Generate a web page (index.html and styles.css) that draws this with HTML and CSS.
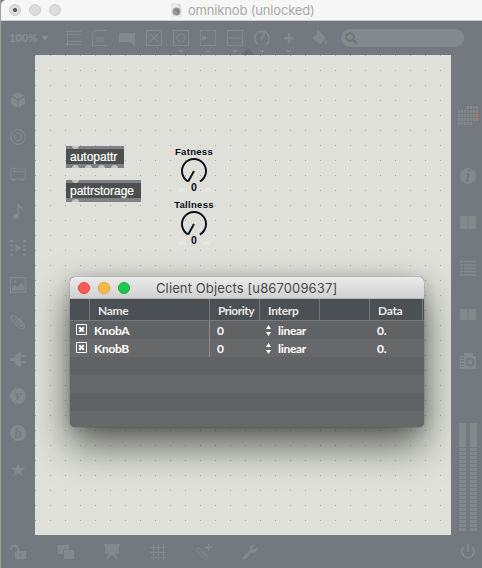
FILE: index.html
```html
<!DOCTYPE html>
<html lang="en">
<head>
<meta charset="utf-8">
<title>omniknob (unlocked)</title>
<link rel="stylesheet" href="styles.css">
</head>
<body>
<svg width="0" height="0" class="defs">
  <symbol id="book" viewBox="0 0 16 14"><path d="M0 0h7.600v14H0zM8.400 0H16v14H8.400z"/></symbol>
  <symbol id="clip" viewBox="0 0 16 16"><path class="ln" d="M5 5l6 7c1 1 2.600-.2 1.700-1.400L6 2.800C3.500 0-.7 2.500 1.500 5.500l6.700 7.700c4 4 8.500.7 5.500-3.500L9 4.300"/></symbol>
  <symbol id="dial" viewBox="0 0 28 28"><path class="arc" d="M8.200 24.500A12 12 0 1 1 19.800 24.500M14 14L8.200 24.500"/></symbol>
</svg>
<div class="app">
  <header class="title">
    <i class="light closed"></i><i class="light"></i><i class="light"></i>
    <svg class="doc" width="11" height="14" viewBox="0 0 11 14"><path d="M0 0h7.500L11 3.500V14H0z" fill="#e9e9e9"/><path d="M7.500 0v3.500H11" fill="#d4d4d4"/><circle cx="5.500" cy="8.500" r="4" fill="#96989b"/><path d="M4 7h3v3" stroke="#64686c" fill="none"/></svg>
    <span class="name">omniknob (unlocked)</span>
  </header>
  <div class="toolbar">
    <span class="zoom">100%</span><i class="caret"></i>
    <div class="tools">
      <svg viewBox="0 0 16 24"><path class="ln thin" d="M2.500 0v16M0 1.500h16M3 4.500h13M3 11.500h13M0 14.500h16"/></svg>
      <svg viewBox="0 0 16 24"><path class="ln" d="M15 .5H3L.5 3v12.500H15"/><text x="4" y="11.500" class="glyph m">m</text></svg>
      <svg viewBox="0 0 16 24"><path d="M0 3h16v13l-5-4H0z"/></svg>
      <svg viewBox="0 0 16 24"><path class="ln" d="M.5.5h15v15H.5zM4 4l8 8M12 4l-8 8"/></svg>
      <svg viewBox="0 0 16 24"><path class="ln" d="M.5.5h15v15H.5z"/><circle class="ln" cx="8" cy="8" r="4"/><path d="M5 20h6l-3 3z"/></svg>
      <svg viewBox="0 0 16 24"><path class="ln" d="M.5.5h15v15H.5z"/><path d="M2 5l6 3-6 3zM5 20h6l-3 3z"/></svg>
      <svg viewBox="0 0 16 24"><path class="ln" d="M.5.5h15v15H.5zM2 8h12"/><path d="M5 20h6l-3 3z"/></svg>
      <svg viewBox="0 0 16 24"><path class="notch" d="M-13 25l7-7 7 7z"/><path class="ln wide" d="M4 14.500A7.200 7.200 0 1 1 12 14.500M7 10l3.500-7"/><path d="M5 20h6l-3 3z"/></svg>
      <svg viewBox="0 0 16 24"><path d="M6.700 3h2.600v4H13v2.600H9.300v4H6.700v-4H3V7h3.700zM5 20h6l-3 3z"/></svg>
      <svg class="bucket" viewBox="0 0 16 24"><path d="M5 1l1-1 8 8-6 6-8-6 5-4V3zM14 9c1.500 3 2 5 0 5s-1.500-2 0-5z"/></svg>
    </div>
    <div class="search"><svg width="13" height="13" viewBox="0 0 13 13"><circle cx="5" cy="5" r="3.800"/><path d="M8 8l4 4"/></svg></div>
  </div>
  <main class="middle">
    <nav class="rail left">
      <svg viewBox="0 0 16 16"><path d="M8 0l6.500 3.500L8 7 1.500 3.500zM1 4.500l6.500 3.700V16L1 12zM15 4.500L8.500 8.200V16L15 12z"/></svg>
      <svg viewBox="0 0 16 16"><g class="ln"><circle cx="8" cy="8" r="7.300"/><circle cx="8" cy="8" r="3.500"/></g></svg>
      <svg viewBox="0 0 16 16"><path class="ln" d="M.7 3h14.600v10H.7zM3 5.500h10.500M2.500 2h2M2 14.200h2.500M11 14.200h2.500"/></svg>
      <svg viewBox="0 0 16 16"><path d="M7.500 0h1.400c.3 3.200 6 3.500 4.300 9-.2-3-1.700-4-4-4v7.500c0 4.200-6.200 4.500-6.200 1.300 0-2.500 2.600-3.500 4.500-2.600z"/></svg>
      <svg viewBox="0 0 16 16"><path d="M5.500 4l6 4-6 4z"/><path class="ln film" d="M1.500 0v16M14.500 0v16"/></svg>
      <svg viewBox="0 0 16 16"><path class="ln" d="M.6.600h14.800v14.800H.6z"/><path d="M2 13.500V11l3-3 3 3 3.500-5.500L14 9.500v4z"/><circle cx="5" cy="4.500" r="1.300"/></svg>
      <svg viewBox="0 0 16 16"><use href="#clip"/></svg>
      <svg viewBox="0 0 16 16"><path d="M0 7h4c.5-3 3-5 7-6v3h5v2h-5v4h5v2h-5v4c-4-1-6.500-3-7-6H0z"/></svg>
      <svg viewBox="0 0 16 16"><circle cx="8" cy="8" r="8"/><text x="8" y="12" class="glyph cut">v</text></svg>
      <svg viewBox="0 0 16 16"><circle cx="8" cy="8" r="8"/><text x="8" y="13" class="glyph cut">b</text></svg>
      <svg viewBox="0 0 16 16"><path d="M8 .5l1.900 5.300h5.600L11 9.200l1.700 5.300L8 11.300l-4.700 3.200L5 9.200.5 5.800h5.600z"/></svg>
    </nav>
    <section class="canvas">
      <div class="box auto"><span>autopattr</span><i class="port in"></i><i class="port o1"></i><i class="port o2"></i><i class="port o3"></i><i class="port o4"></i></div>
      <div class="box store"><span>pattrstorage</span><i class="port in"></i><i class="port o1"></i></div>
      <div class="knob k1"><b>Fatness</b><svg width="28" height="28"><use href="#dial"/><path class="outlet" d="M-2 35a4 4 0 0 1 8 0zM23 35a4 4 0 0 1 8 0z"/></svg><b class="val">0</b></div>
      <div class="knob k2"><b>Tallness</b><svg width="28" height="28"><use href="#dial"/><path class="outlet" d="M-2 35a4 4 0 0 1 8 0zM23 35a4 4 0 0 1 8 0z"/></svg><b class="val">0</b></div>
      <div class="window">
        <div class="wtitle"><i class="red"></i><i class="amber"></i><i class="green"></i><span>Client Objects [u867009637]</span></div>
        <div class="row head"><span></span><span>Name</span><span class="tight">Priority</span><span>Interp</span><span></span><span>Data</span><span></span></div>
        <div class="row"><span><svg class="chk" width="11" height="11" viewBox="0 0 11 11"><path d="M.5.5h10v10H.5z"/><path class="x" d="M3.200 3.200l4.600 4.600M7.800 3.200L3.200 7.800"/></svg></span><span>KnobA</span><span>0</span><span><svg class="step" width="5" height="11" viewBox="0 0 5 11"><path d="M0 4l2.500-4L5 4zM0 7l2.500 4L5 7z"/></svg>linear</span><span></span><span>0.</span></div>
        <div class="row"><span><svg class="chk" width="11" height="11" viewBox="0 0 11 11"><path d="M.5.5h10v10H.5z"/><path class="x" d="M3.200 3.200l4.600 4.600M7.800 3.200L3.200 7.800"/></svg></span><span>KnobB</span><span>0</span><span><svg class="step" width="5" height="11" viewBox="0 0 5 11"><path d="M0 4l2.500-4L5 4zM0 7l2.500 4L5 7z"/></svg>linear</span><span></span><span>0.</span></div>
        <div class="row blank"></div><div class="row blank"></div><div class="row blank"></div><div class="row blank last"></div>
      </div>
    </section>
    <aside class="rail right">
      <svg class="matrix" width="20" height="19" viewBox="0 0 20 19"><path class="cells" d="M9 1.500h11M0 5.500h20M0 9.500h20M0 13.500h20M0 17.500h14"/><path d="M18 8h2v3h-2z" fill="#e56c26"/></svg>
      <svg class="info" width="16" height="16" viewBox="0 0 16 16"><circle cx="8" cy="8" r="8"/><text x="8" y="13.500" class="glyph cut i">i</text></svg>
      <svg class="b1" width="16" height="13" viewBox="0 0 16 14" preserveAspectRatio="none"><use href="#book" width="16" height="14"/></svg>
      <svg class="list" width="16" height="16" viewBox="0 0 16 16"><path class="ln wide" d="M0 1.500h3M4 1.500h12M0 5h3M4 5h12M0 8.300h3M4 8.300h12M0 11.600h3M4 11.600h12M0 15h3M4 15h12"/></svg>
      <svg class="b2" width="16" height="11" viewBox="0 0 16 14" preserveAspectRatio="none"><use href="#book" width="16" height="14"/></svg>
      <svg class="cam" width="16" height="16" viewBox="0 0 16 16"><path d="M0 3h4V0h9v3h3v13H0z"/><circle class="hole" cx="10" cy="9" r="3.500"/><path class="slots" d="M2.500 4v10"/></svg>
      <div class="meters"><i></i><i></i></div>
    </aside>
  </main>
  <footer class="bottom">
    <svg class="lock" viewBox="0 0 16 16"><path d="M5 7h11v8H5zM0 6c0-7 9-7 9 0v1H7V6c0-4-5-4-5 0z"/><path class="hole2" d="M10.500 9.500v3"/></svg>
    <svg viewBox="0 0 16 16"><path d="M0 1h11v4H5v5H0z"/><path d="M6 6h10v9H6z"/></svg>
    <svg viewBox="0 0 16 16"><path d="M0 0h16v1h-1v9h-4l3.500 5H12L8 11l-4 4H1.500L5 10H1V1H0z"/></svg>
    <svg viewBox="0 0 16 16"><path class="ln thin" d="M3.500 0v16M8.500 0v16M13.500 0v16M0 3.500h16M0 8.500h16M0 13.500h16"/></svg>
    <svg viewBox="0 0 16 16"><use href="#clip" x="0" y="3" width="13" height="13"/><path class="ln wide" d="M12.500 0v7M9 3.500h7"/></svg>
    <svg viewBox="0 0 16 16"><path d="M1 13l7-6.500C7 3 9 0 13 .5L10.500 3l.5 2 2 .5L15.700 3c.5 4-2.500 6.500-6 5.500L3.500 15C1.500 16.500-.5 14.500 1 13z"/></svg>
    <svg class="power" viewBox="0 0 16 16"><path class="ln pw" d="M4 3.200a6 6 0 1 0 8 0M8 0v8"/></svg>
  </footer>
</div>
</body>
</html>
```
FILE: styles.css
```css
* { box-sizing: border-box; }
body { margin: 0; overflow: hidden; background: #a0a29c; }
.defs { position: absolute; }
svg { display: block; overflow: visible; fill: #84898c; flex: none; }
.ln { fill: none; stroke: #84898c; stroke-width: 1.200; }
.thin { stroke-width: 1; }
.wide { stroke-width: 1.700; }
.pw { stroke-width: 2; }
.notch { fill: #696d73; }
.app { width: 482px; height: 568px; display: flex; flex-direction: column; border-left: 1px solid #a0a29a; background: #747980; }

.title { height: 21px; flex: none; display: flex; align-items: center; padding: 0 0 1px 8px; gap: 8px; background: #f6f6f6; border-bottom: 1px solid #cdcecc; border-radius: 5px 0 0 0; }
.light { width: 12px; height: 12px; border-radius: 50%; background: #dcdcdc; border: 1px solid #cecece; }
.closed { background: radial-gradient(circle, #5c5c5c 0 1.800px, #dcdcdc 2.300px); }
.doc { margin-left: 102px; }
.name { font: 13px/18px Inter, sans-serif; color: #aaa; width: 140px; margin: 1px 0 0 -2px; letter-spacing: -.17px; white-space: nowrap; }

.toolbar { height: 34px; flex: none; display: flex; padding-left: 8px; }
.zoom { width: 34px; font: bold 11px/34px Lato, sans-serif; color: #8c9093; }
.caret { margin: 15px 18px 0 -1px; border: 3px solid transparent; border-top: 5px solid #8c9093; height: 5px; }
.tools { display: flex; gap: 11px; padding-top: 9px; margin-left: -1px; width: 275px; }
.tools svg { width: 16px; height: 24px; }
.tools .bucket { margin-left: 4px; }
.glyph { font: italic bold 15px "Liberation Serif", serif; }
.m { font: italic bold 9px "Liberation Sans", sans-serif; }
.cut { fill: #747980; text-anchor: middle; }
.search { width: 123px; height: 18px; margin: 8px 0 0 1px; border-radius: 9px; background: #84898c; padding: 3px 4px; }
.search svg { fill: none; stroke: #6e7479; stroke-width: 2; }

.middle { height: 480px; display: flex; }
.rail { display: flex; flex-direction: column; flex: none; }
.left { width: 34px; padding: 37px 0 0 9px; gap: 21px; }
.left svg { width: 16px; height: 16px; }
.film { stroke-width: 3; stroke-dasharray: 2 2.500; }
.right { width: 31px; padding: 51px 0 0 9px; }
.matrix { margin-left: -2px; }
.cells { stroke: #84898c; stroke-width: 3; stroke-dasharray: 2 1; }
.info { margin-top: 43px; }
.i { font-size: 18px; }
.b1 { margin-top: 32px; }
.list { margin-top: 31px; }
.b2 { margin-top: 33px; }
.cam { margin-top: 33px; }
.hole { fill: none; stroke: #747980; stroke-width: 2; }
.hole2 { stroke: #747980; stroke-width: 2; }
.slots { stroke: #747980; stroke-width: 2.500; stroke-dasharray: 1.500 1.500; }
.meters { display: flex; gap: 4px; margin: 54px 0 0 -1px; }
.meters i { width: 7px; height: 108px; background: linear-gradient(#84898c 0 24px, transparent 24px), repeating-linear-gradient(transparent 0 1px, #84898c 1px 4px); }

.canvas { position: relative; width: 416px; height: 480px; overflow: hidden; background: conic-gradient(from 270deg at 1px 1px, #abada8 90deg, transparent 0) 0 0 / 15px 15px, #dee0d9; }
.box { position: absolute; left: 31px; height: 22px; background: #4b504e; border: solid #808187; border-width: 3px 0 4px; font: 12px/17px "Liberation Sans", Arial, sans-serif; color: #fff; padding-left: 4px; clip-path: inset(0); -webkit-text-stroke: .2px #fff; }
.auto { top: 91px; width: 58px; }
.store { top: 125px; width: 75px; }
.port { position: absolute; width: 7px; height: 7px; border-radius: 50%; background: #c5c6c8; left: 6px; }
.in { top: -7px; }
.o1, .o2, .o3, .o4 { bottom: -8px; }
.o2 { left: 19px; } .o3 { left: 32px; } .o4 { left: 45px; }
.knob { position: absolute; left: 134px; width: 50px; height: 48px; display: flex; flex-direction: column; align-items: center; font: bold 9.500px/11px "Liberation Sans", Arial, sans-serif; letter-spacing: .3px; color: #080a16; }
.k1 { top: 91px; } .k2 { top: 144px; }
.arc { fill: none; stroke: #0b0e1b; stroke-width: 1.900; }
.outlet { fill: #e6e7e3; }
.val { margin-top: -3px; letter-spacing: 0; font-size: 10.500px; }

.window { position: absolute; left: 35px; top: 222px; width: 354px; height: 150px; border-radius: 5px; overflow: hidden; background: #656668; box-shadow: 0 0 1px rgba(0,0,0,.6), 0 18px 38px rgba(0,0,0,.6), 0 2px 14px rgba(0,0,0,.14); }
.wtitle { height: 22px; display: flex; align-items: center; padding-left: 8px; gap: 8px; background: linear-gradient(#ebebeb, #d1d1d1); border-bottom: 1px solid #b7b7b7; }
.wtitle i { width: 12px; height: 12px; border-radius: 50%; border: 1px solid #e0433f; background: #fd5b57; }
.wtitle .amber { background: #fdbb46; border-color: #e0a031; }
.wtitle .green { background: #1fc650; border-color: #16a840; }
.wtitle span { margin: 1px 0 0 18px; font: 13px/20px Inter, sans-serif; color: #48484a; letter-spacing: .12px; white-space: nowrap; }
.row { display: grid; grid-template-columns: 20px 120px 50px 60px 50px 53px 1px; height: 18px; font: bold 12px/20px Lato, sans-serif; letter-spacing: -.3px; color: #fff; background: #616264; }
.row:nth-child(even) { background: #67686a; }
.row.head { height: 22px; line-height: 23px; background: #4b5054; color: #e8e8ea; border-bottom: 1px solid #77797c; }
.row > span { display: flex; align-items: center; height: 18px; padding: 1px 0 0 7px; }
.row.head > span { height: 21px; padding-top: 1px; }
.row > span:nth-child(2) { padding-left: 4px; border-right: 1px solid #8a8b8e; }
.row:not(.head) > span:first-child { padding-left: 6px; }
.row:not(.head) > span:nth-child(4) { padding-left: 6px; gap: 7px; }
.head > span { border-right: 1px solid #73777b; }
.row.head > span { padding-left: 8px; border-color: #73777b; }
.head .tight { letter-spacing: -.5px; }
.chk { fill: none; stroke: #fff; margin-top: -2px; }
.x { stroke-width: 2; }
.step { fill: #fff; margin-top: -1px; }

.bottom { height: 33px; display: flex; gap: 30px; padding: 9px 0 0 9px; }
.bottom svg { width: 16px; height: 16px; }
.bottom .lock { margin-right: 2px; }
.bottom .power { margin-left: 172px; }
```
